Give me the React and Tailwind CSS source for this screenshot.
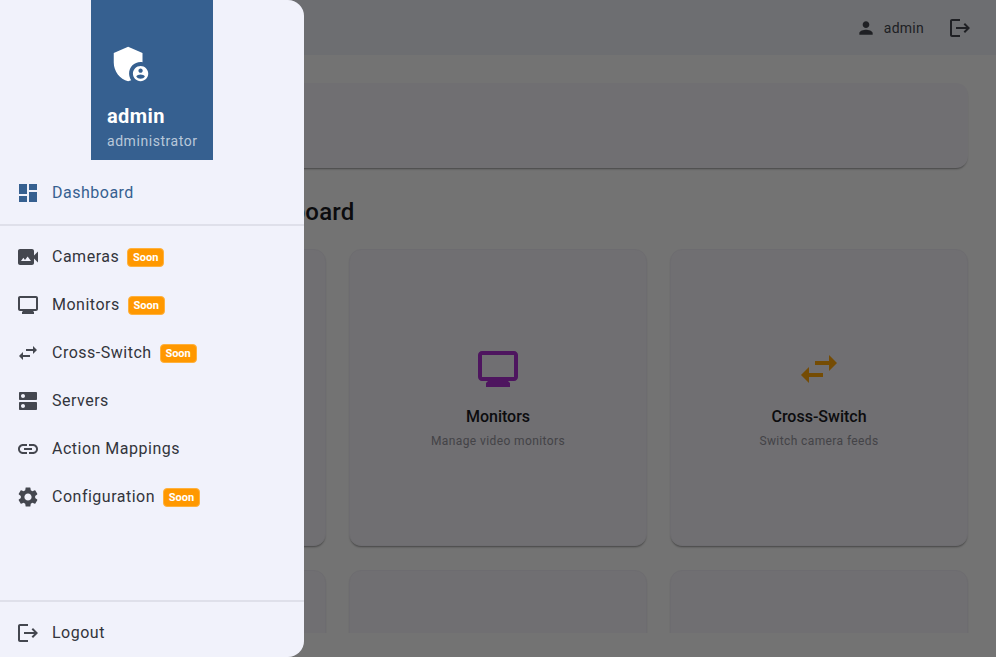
import React from "react";
import {
  MdAdminPanelSettings,
  MdDashboard,
  MdDns,
  MdLink,
  MdLogout,
  MdOutlineMonitor,
  MdPerson,
  MdSettings,
  MdSwapHoriz,
  MdVideoCameraBack,
} from "react-icons/md";

const navItems = [
  { label: "Cameras", icon: MdVideoCameraBack, soon: true },
  { label: "Monitors", icon: MdOutlineMonitor, soon: true },
  { label: "Cross-Switch", icon: MdSwapHoriz, soon: true },
  { label: "Servers", icon: MdDns },
  { label: "Action Mappings", icon: MdLink },
  { label: "Configuration", icon: MdSettings, soon: true },
];

const cards = [
  { title: "Cameras", text: "View and control cameras", icon: MdVideoCameraBack, color: "text-[#1976d2]" },
  { title: "Monitors", text: "Manage video monitors", icon: MdOutlineMonitor, color: "text-[#ab2ecf]" },
  { title: "Cross-Switch", text: "Switch camera feeds", icon: MdSwapHoriz, color: "text-[#ffa50a]" },
  { title: "Servers", text: "", icon: null },
  { title: "Action Mappings", text: "", icon: null },
  { title: "Configuration", text: "", icon: null },
];

function NavRow({ label, icon: Icon, soon }) {
  return (
    <div className="flex h-12 items-center pl-[16px]">
      <Icon className="shrink-0 text-[#44474f]" size={24} />
      <span className="ml-[12px] text-[16px] leading-6 tracking-[0.5px] text-[#33353c]">{label}</span>
      {soon && (
        <span className="mt-[1px] ml-2 flex h-[19px] w-[37px] items-center justify-center rounded-[4px] border border-[#ffb13d] bg-[#ff9800] pt-[1px] text-[11px] font-bold text-white">
          Soon
        </span>
      )}
    </div>
  );
}

function Card({ title, text, icon: Icon, color }) {
  return (
    <div className="flex h-[297px] flex-col items-center rounded-[12px] border border-[#eeecf3] bg-[#f3f1f8] pt-[95px] shadow-[0_2px_2px_-1px_rgba(0,0,0,0.4)]">
      {Icon && (
        <>
          <Icon className={color} size={48} />
          <div className="mt-[12px] text-[16px] leading-6 font-medium text-[#1b1b1f]">{title}</div>
          <div className="mt-[4px] text-[12px] leading-4 tracking-[0.4px] text-[#94939b]">{text}</div>
        </>
      )}
    </div>
  );
}

export default function App() {
  return (
    <div className="relative flex h-screen w-full flex-col overflow-hidden bg-[#fafafa] font-['Roboto',sans-serif]">
      <header className="flex h-[55px] shrink-0 items-center justify-end bg-[#eef0f6] pt-[1px] pr-[24px]">
        <MdPerson className="text-[#44474f]" size={20} />
        <span className="ml-2 text-[14px] tracking-[0.25px] text-[#44474f]">admin</span>
        <MdLogout className="ml-[24px] text-[#44474f]" size={24} />
      </header>

      <main className="h-[578px] shrink-0 overflow-hidden px-[28px] pt-[28px]">
        <div className="h-[85px] rounded-[12px] bg-[#f3f1f8] shadow-[0_2px_2px_-1px_rgba(0,0,0,0.4)]" />
        <h1 className="mt-[28px] text-[24px] leading-8 font-medium tracking-[0.2px] text-[#1b1b1f]">Video Surveillance Dashboard</h1>
        <div className="mt-[21px] grid grid-cols-3 gap-x-[23px] gap-y-[24px]">
          {cards.map((card) => (
            <Card key={card.title} {...card} />
          ))}
        </div>
      </main>

      <div className="absolute inset-0 bg-black/54" />

      <aside className="absolute top-0 bottom-0 left-0 flex w-[304px] flex-col rounded-r-[16px] bg-[#f1f2fb]">
        <div className="mx-auto flex h-[160px] w-[122px] shrink-0 flex-col bg-[#366090] px-4 pt-[41px]">
          <MdAdminPanelSettings className="ml-[1px] text-white" size={46} />
          <div className="mt-[15px] text-[20px] leading-7 font-bold tracking-[0.4px] text-white">admin</div>
          <div className="mt-[1px] text-[14px] leading-5 tracking-[0.55px] whitespace-nowrap text-[#b9c8da]">administrator</div>
        </div>
        <div className="mt-[9px] flex h-12 shrink-0 items-center pl-[16px]">
          <MdDashboard className="text-[#366090]" size={24} />
          <span className="ml-[12px] text-[16px] leading-6 tracking-[0.5px] text-[#366090]">Dashboard</span>
        </div>
        <div className="mt-[7px] mb-[7px] h-[2px] shrink-0 bg-[#dfe0ea]" />
        {navItems.map((item) => (
          <NavRow key={item.label} {...item} />
        ))}
        <div className="mt-auto mb-[7px] h-[2px] shrink-0 bg-[#dfe0ea]" />
        <NavRow label="Logout" icon={MdLogout} />
      </aside>
    </div>
  );
}
